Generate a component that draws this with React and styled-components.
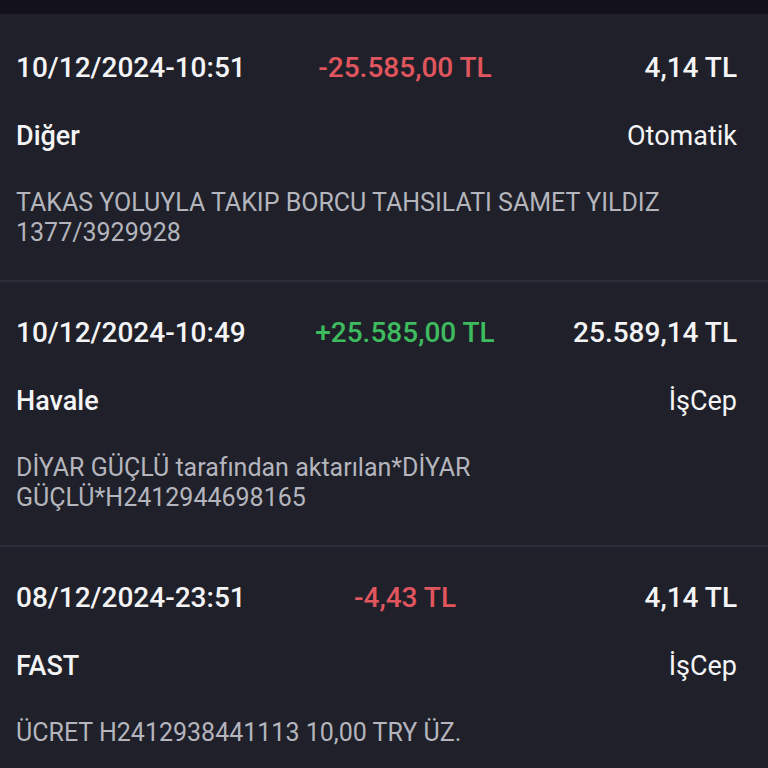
import React from "react";
import styled, { createGlobalStyle } from "styled-components";

const GlobalStyle = createGlobalStyle`
  html, body {
    margin: 0;
    padding: 0;
    background: #1f2029;
  }
  body {
    font-family: Roboto, "Liberation Sans", sans-serif;
    -webkit-font-smoothing: antialiased;
  }
`;

const transactions = [
  {
    date: "10/12/2024-10:51",
    amount: "-25.585,00 TL",
    balance: "4,14 TL",
    type: "Diğer",
    channel: "Otomatik",
    description: "TAKAS YOLUYLA TAKIP BORCU TAHSILATI SAMET YILDIZ 1377/3929928",
  },
  {
    date: "10/12/2024-10:49",
    amount: "+25.585,00 TL",
    balance: "25.589,14 TL",
    type: "Havale",
    channel: "İşCep",
    description: "DİYAR GÜÇLÜ tarafından aktarılan*DİYAR GÜÇLÜ*H2412944698165",
  },
  {
    date: "08/12/2024-23:51",
    amount: "-4,43 TL",
    balance: "4,14 TL",
    type: "FAST",
    channel: "İşCep",
    description: "ÜCRET H2412938441113 10,00 TRY ÜZ.",
  },
];

const Screen = styled.div`
  width: 768px;
  height: 768px;
  overflow: hidden;
  background: #1f2029;
`;

const TopBar = styled.div`
  height: 14px;
  background: #13121b;
`;

const List = styled.div`
  display: flex;
  flex-direction: column;
`;

const Card = styled.div`
  padding: ${(p) => (p.$first ? "38px" : "35px")} 31px 32px 16px;
  border-top: ${(p) => (p.$first ? "none" : "2px solid #2c2d38")};
  display: flex;
  flex-direction: column;
  gap: 36px;
`;

const TopRow = styled.div`
  display: grid;
  grid-template-columns: 289px 200px 1fr;
  align-items: center;
  line-height: 32px;
  font-size: 28px;
  font-weight: 500;
  color: #f4f4f6;
`;

const DateText = styled.span`
  white-space: nowrap;
`;

const Amount = styled.span`
  text-align: center;
  white-space: nowrap;
  color: ${(p) => (p.$positive ? "#3dbb5e" : "#e1565e")};
`;

const Balance = styled.span`
  text-align: right;
  white-space: nowrap;
`;

const InfoRow = styled.div`
  display: flex;
  justify-content: space-between;
  align-items: center;
  line-height: 32px;
  font-size: 27px;
  color: #f4f4f6;
`;

const TypeText = styled.span`
  font-weight: 500;
`;

const Channel = styled.span`
  font-weight: 400;
`;

const Description = styled.div`
  font-size: 25px;
  line-height: 30px;
  color: #b4b5bd;
  min-height: 60px;
`;

export default function App() {
  return (
    <>
      <GlobalStyle />
      <Screen>
        <TopBar />
        <List>
          {transactions.map((t, i) => (
            <Card key={t.date} $first={i === 0}>
              <TopRow>
                <DateText>{t.date}</DateText>
                <Amount $positive={t.amount.startsWith("+")}>{t.amount}</Amount>
                <Balance>{t.balance}</Balance>
              </TopRow>
              <InfoRow>
                <TypeText>{t.type}</TypeText>
                <Channel>{t.channel}</Channel>
              </InfoRow>
              <Description>{t.description}</Description>
            </Card>
          ))}
        </List>
      </Screen>
    </>
  );
}
